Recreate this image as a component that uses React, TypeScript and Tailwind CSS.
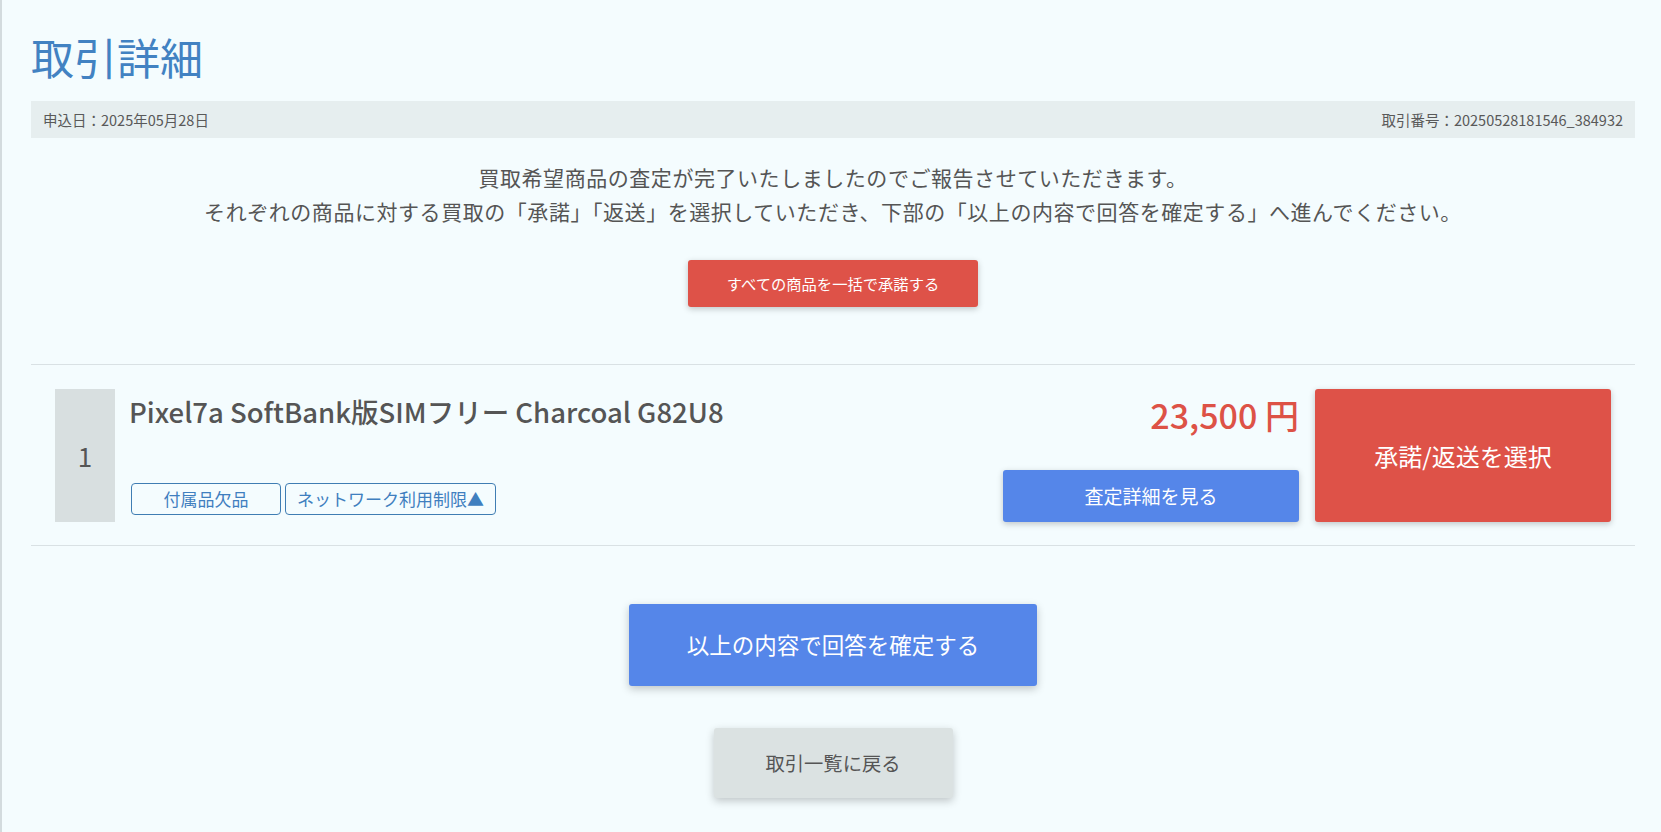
import React from "react";

const font = { fontFamily: '"Noto Sans CJK JP", "Noto Sans", sans-serif' };

export default function App() {
  return (
    <div
      style={font}
      className="min-h-[832px] bg-[#f4fcfe] border-l-2 border-[#d3dbde] pl-[29px] pr-[26px] text-[#555]"
    >
      <h1 className="pt-[31px] text-[43px] leading-[50px] font-normal text-[#4282c2]">取引詳細</h1>

      <div className="mt-[20px] h-[37px] flex items-center justify-between px-3 bg-[#e6eeef] text-[14.5px] text-[#595959]">
        <span>申込日：2025年05月28日</span>
        <span>取引番号：20250528181546_384932</span>
      </div>

      <div className="mt-[22px] text-center text-[21px] leading-[34px] tracking-[0.55px] text-[#555]">
        <p>買取希望商品の査定が完了いたしましたのでご報告させていただきます。</p>
        <p>それぞれの商品に対する買取の「承諾」「返送」を選択していただき、下部の「以上の内容で回答を確定する」へ進んでください。</p>
      </div>

      <div className="mt-[32px] flex justify-center">
        <button className="w-[290px] h-[47px] rounded-[3px] bg-[#de5248] text-white text-[15.3px] shadow-[0_2px_6px_rgba(0,0,0,0.22)]">
          すべての商品を一括で承諾する
        </button>
      </div>

      <div className="mt-[57px] border-t border-b border-[#d9e1e4] px-[24px] pt-[24px] pb-[23px] flex">
        <div className="w-[60px] h-[133px] bg-[#d8dfe0] flex items-center justify-center text-[26px] text-[#555]">
          1
        </div>
        <div className="ml-[14px] flex-1 flex flex-col justify-between">
          <div className="pt-[4px] text-[27.5px] leading-[36px] font-medium text-[#555]">
            Pixel7a SoftBank版SIMフリー Charcoal G82U8
          </div>
          <div className="mb-[7px] ml-[2px] flex gap-[4px]">
            <span className="h-[32px] min-w-[150px] px-[11px] flex items-center justify-center border border-[#3f7db3] rounded-[4px] text-[17px] text-[#3f7fbf]">
              付属品欠品
            </span>
            <span className="h-[32px] min-w-[150px] px-[11px] flex items-center justify-center border border-[#3f7db3] rounded-[4px] text-[17px] text-[#3f7fbf]">
              ネットワーク利用制限▲
            </span>
          </div>
        </div>
        <div className="w-[296px] flex flex-col justify-between items-end">
          <div className="pt-[4px] text-[34px] leading-[43px] font-medium text-[#dd5246]">
            23,500 円
          </div>
          <button className="w-[296px] h-[52px] rounded-[3px] bg-[#5586e9] text-white text-[19px] shadow-[0_2px_6px_rgba(0,0,0,0.22)]">
            査定詳細を見る
          </button>
        </div>
        <button className="ml-4 w-[296px] h-[133px] rounded-[3px] bg-[#de5248] text-white text-[24px] shadow-[0_2px_6px_rgba(0,0,0,0.22)]">
          承諾/返送を選択
        </button>
      </div>

      <div className="mt-[58px] flex justify-center">
        <button className="w-[408px] h-[82px] rounded-[3px] bg-[#5586e9] text-white text-[22.5px] shadow-[0_3px_8px_rgba(0,0,0,0.22)]">
          以上の内容で回答を確定する
        </button>
      </div>

      <div className="mt-[42px] flex justify-center pb-[34px]">
        <button className="w-[239px] h-[70px] rounded-[3px] bg-[#dbe2e2] text-[#555] text-[19.3px] shadow-[0_3px_8px_rgba(0,0,0,0.22)]">
          取引一覧に戻る
        </button>
      </div>
    </div>
  );
}
